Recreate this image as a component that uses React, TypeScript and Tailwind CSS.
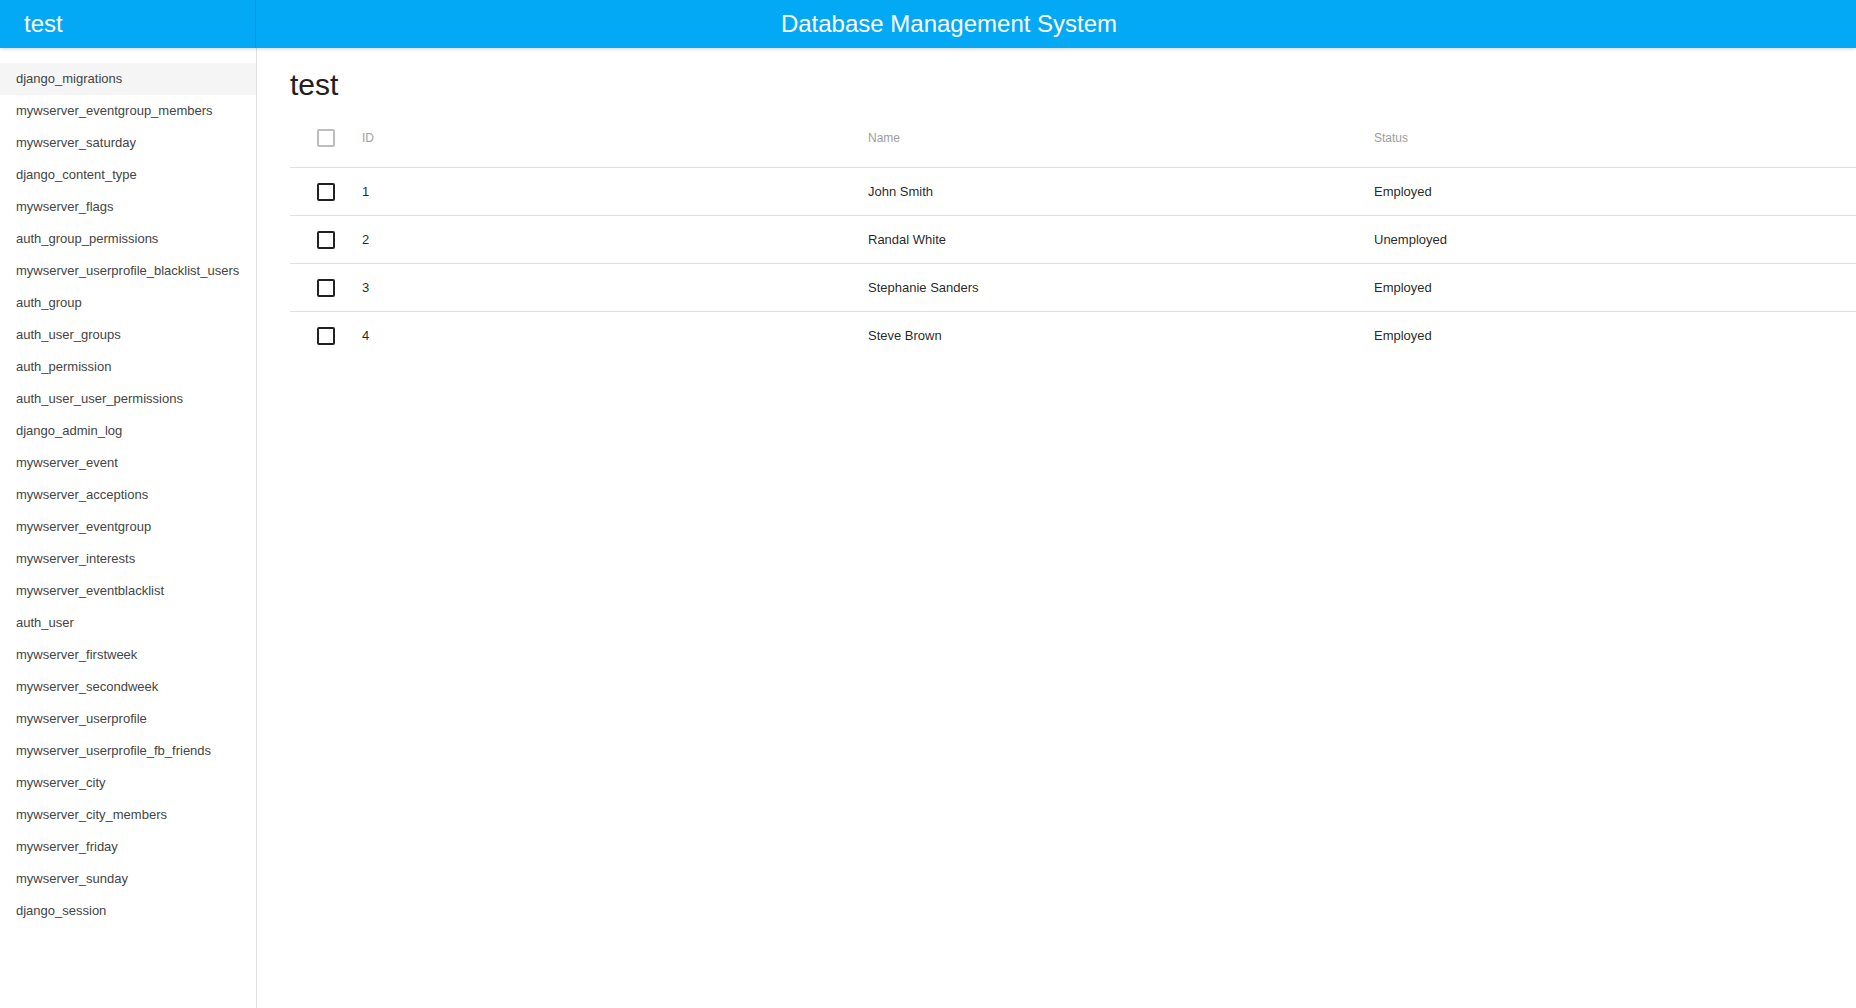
const tables = [
  "django_migrations",
  "mywserver_eventgroup_members",
  "mywserver_saturday",
  "django_content_type",
  "mywserver_flags",
  "auth_group_permissions",
  "mywserver_userprofile_blacklist_users",
  "auth_group",
  "auth_user_groups",
  "auth_permission",
  "auth_user_user_permissions",
  "django_admin_log",
  "mywserver_event",
  "mywserver_acceptions",
  "mywserver_eventgroup",
  "mywserver_interests",
  "mywserver_eventblacklist",
  "auth_user",
  "mywserver_firstweek",
  "mywserver_secondweek",
  "mywserver_userprofile",
  "mywserver_userprofile_fb_friends",
  "mywserver_city",
  "mywserver_city_members",
  "mywserver_friday",
  "mywserver_sunday",
  "django_session",
];

const rows = [
  { id: 1, name: "John Smith", status: "Employed" },
  { id: 2, name: "Randal White", status: "Unemployed" },
  { id: 3, name: "Stephanie Sanders", status: "Employed" },
  { id: 4, name: "Steve Brown", status: "Employed" },
];

function Checkbox({ muted }: { muted?: boolean }) {
  return (
    <div
      className={
        muted
          ? "w-[18px] h-[18px] border-2 border-[#bdbdbd] rounded-[2px]"
          : "w-[18px] h-[18px] border-2 border-[#212121] rounded-[2px]"
      }
    />
  );
}

export default function App() {
  return (
    <div className="h-screen flex flex-col bg-white font-['Liberation_Sans',Arial,sans-serif] overflow-hidden">
      {/* app bar */}
      <header className="h-[48px] flex bg-[#03a9f4] text-white shadow-[0_1px_4px_rgba(0,0,0,0.18)] relative z-10 shrink-0">
        <div className="w-[256px] border-r border-[#0398dc] pl-[24px] text-[24px] leading-[48px]">
          test
        </div>
        <div className="flex-1 text-center pr-[214px] text-[24px] leading-[48px]">
          Database Management System
        </div>
      </header>

      <div className="flex flex-1 min-h-0">
        {/* sidebar */}
        <aside className="w-[257px] shrink-0 border-r border-[#e0e0e0] pt-[15px]">
          {tables.map((t, i) => (
            <div
              key={t}
              className={
                i === 0
                  ? "h-[32px] leading-[32px] pl-[16px] text-[13px] text-[#444] bg-[#f5f5f5]"
                  : "h-[32px] leading-[32px] pl-[16px] text-[13px] text-[#444]"
              }
            >
              {t}
            </div>
          ))}
        </aside>

        {/* main */}
        <main className="flex-1 pl-[33px] pt-[22px]">
          <h1 className="text-[30px] leading-[30px] text-[#212121] mb-[12px]">test</h1>

          <div className="w-full">
            <div className="grid grid-cols-[48px_1fr_1fr_1fr] h-[56px] pb-[3px] items-center border-b border-[#e0e0e0] text-[12px] text-[#9e9e9e]">
              <div className="pl-[27px]">
                <Checkbox muted />
              </div>
              <div className="pl-[24px]">ID</div>
              <div className="pl-[24px]">Name</div>
              <div className="pl-[24px]">Status</div>
            </div>
            {rows.map((r, i) => (
              <div
                key={r.id}
                className={
                  i < rows.length - 1
                    ? "grid grid-cols-[48px_1fr_1fr_1fr] h-[48px] items-center border-b border-[#e0e0e0] text-[13px] text-[rgba(0,0,0,0.87)]"
                    : "grid grid-cols-[48px_1fr_1fr_1fr] h-[48px] items-center text-[13px] text-[rgba(0,0,0,0.87)]"
                }
              >
                <div className="pl-[27px]">
                  <Checkbox />
                </div>
                <div className="pl-[24px]">{r.id}</div>
                <div className="pl-[24px]">{r.name}</div>
                <div className="pl-[24px]">{r.status}</div>
              </div>
            ))}
          </div>
        </main>
      </div>
    </div>
  );
}
